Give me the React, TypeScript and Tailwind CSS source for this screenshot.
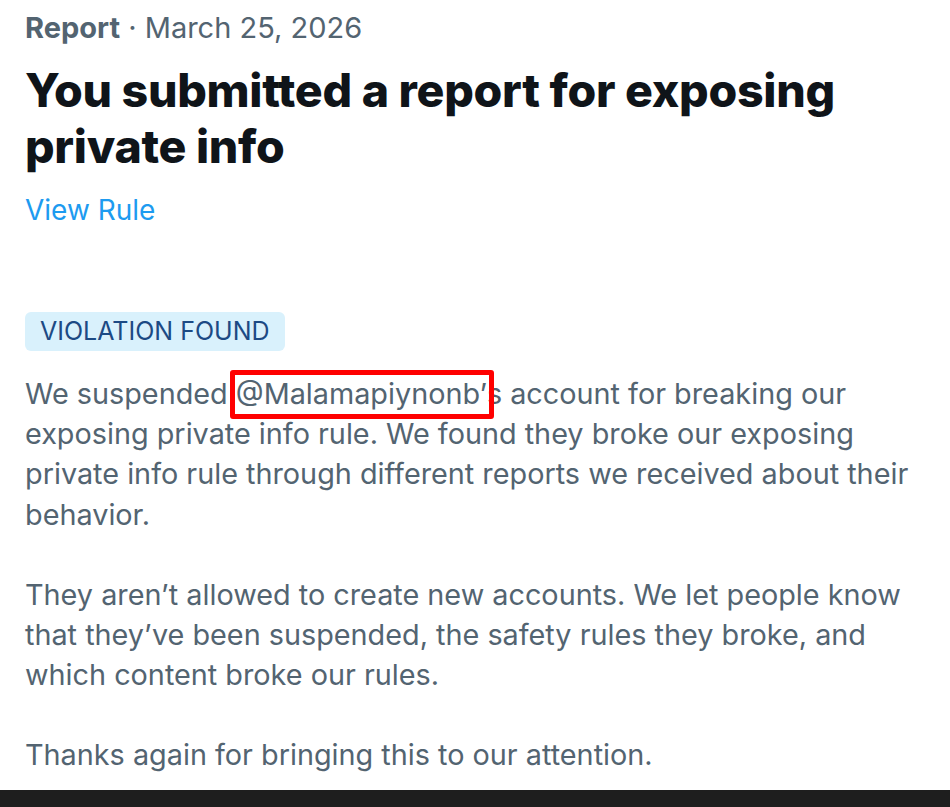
export default function App() {
  return (
    <div className="h-[807px] w-[950px] flex flex-col bg-white overflow-hidden" style={{ fontFamily: "Inter, 'Noto Sans', sans-serif" }}>
      <div className="flex-1 pl-[25px] pt-[8px]">
        <div className="text-[29px] leading-[40px] text-[#536471]">
          <span className="font-bold">Report</span> · March 25, 2026
        </div>
        <h1 className="mt-[14px] text-[46.5px] leading-[56px] font-extrabold text-[#0f1419] tracking-[-0.3px] whitespace-nowrap">
          You submitted a report for exposing
          <br />
          private info
        </h1>
        <div className="mt-[16px] text-[28px] leading-[40px] text-[#1d9bf0]">View Rule</div>

        <div className="mt-[82px] inline-flex h-[39px] items-center rounded-[6px] bg-[#d9f1fc] px-[15px] text-[25px] text-[#1c4a84]">
          VIOLATION FOUND
        </div>

        <div className="mt-[23px] whitespace-nowrap text-[28.8px] leading-[40.2px] text-[#536471]">
          <p>
            We suspended{" "}
            <span className="relative">
              @Malamapiynonb’
              <span className="absolute -left-[6px] -right-[7px] -top-[6px] -bottom-[8px] rounded-[3px] border-[5px] border-[#ff0000]" />
            </span>
            s account for breaking our
            <br />
            exposing private info rule. We found they broke our exposing
            <br />
            private info rule through different reports we received about their
            <br />
            behavior.
          </p>
          <p className="mt-[40px]">
            They aren’t allowed to create new accounts. We let people know
            <br />
            that they’ve been suspended, the safety rules they broke, and
            <br />
            which content broke our rules.
          </p>
          <p className="mt-[40px]">Thanks again for bringing this to our attention.</p>
        </div>
      </div>
      <div className="h-[17px] bg-[#1e1e1e]" />
    </div>
  );
}
